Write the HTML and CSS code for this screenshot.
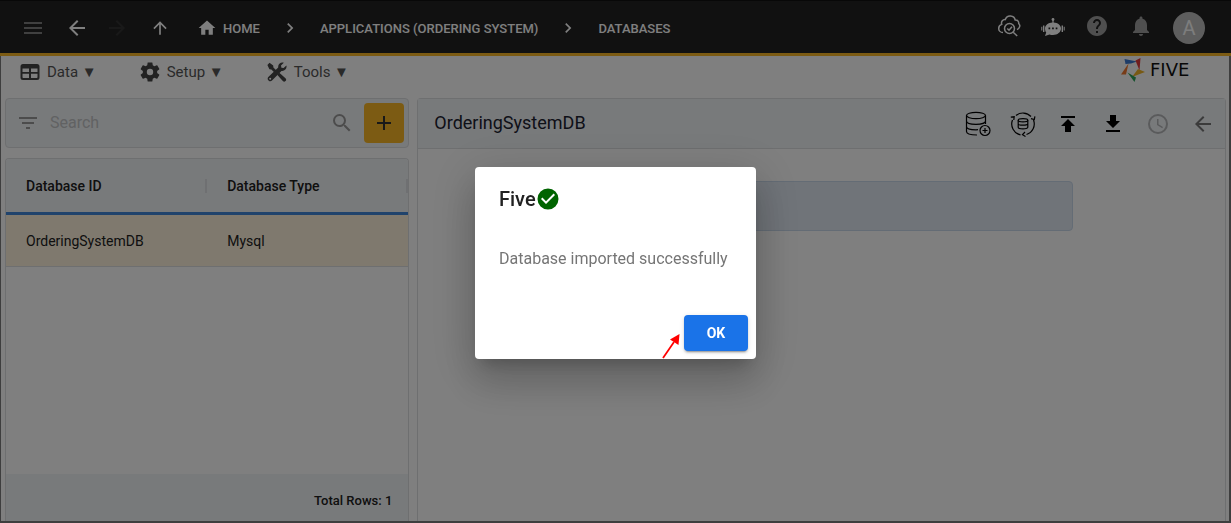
FILE: index.html
```html
<!DOCTYPE html>
<html lang="en">
<head>
<meta charset="utf-8">
<meta name="viewport" content="width=device-width, initial-scale=1">
<title>Five - Databases</title>
<link rel="stylesheet" href="styles.css">
</head>
<body>
<div class="app">
  <header class="topbar">
    <div class="nav-buttons">
      <button class="nav-button muted menu-toggle" type="button" aria-label="Menu"><svg class="icon" viewBox="0 0 24 24"><path d="M3 6h18v2H3zM3 11h18v2H3zM3 16h18v2H3z"/></svg></button>
      <button class="nav-button" type="button" aria-label="Back"><svg class="icon" viewBox="0 0 24 24"><path d="M20 11H7.830l5.590-5.590L12 4l-8 8 8 8 1.410-1.410L7.830 13H20z"/></svg></button>
      <button class="nav-button disabled" type="button" aria-label="Forward" disabled><svg class="icon" viewBox="0 0 24 24"><path d="M12 4l-1.410 1.410L16.170 11H4v2h12.170l-5.580 5.590L12 20l8-8z"/></svg></button>
      <button class="nav-button" type="button" aria-label="Up"><svg class="icon-s" viewBox="0 0 24 24"><path d="M4 12l1.410 1.410L11 7.830V20h2V7.830l5.580 5.590L20 12l-8-8z"/></svg></button>
    </div>
    <nav class="crumbs" aria-label="Breadcrumb">
      <a class="crumb" href="#"><svg class="icon-s" viewBox="0 0 24 24"><path d="M10 20v-6h4v6h5v-8h3L12 3 2 12h3v8z"/></svg>HOME</a>
      <svg class="icon-s" viewBox="0 0 24 24"><path d="M10 6L8.590 7.410 13.170 12l-4.580 4.590L10 18l6-6z"/></svg>
      <a class="crumb" href="#">APPLICATIONS (ORDERING SYSTEM)</a>
      <svg class="icon-s" viewBox="0 0 24 24"><path d="M10 6L8.590 7.410 13.170 12l-4.580 4.590L10 18l6-6z"/></svg>
      <a class="crumb" href="#">DATABASES</a>
    </nav>
    <div class="top-actions">
      <button class="action" type="button" aria-label="Inspect cloud"><svg class="icon" viewBox="0 0 24 24" fill="none" stroke="currentColor" stroke-width="1.500"><path d="M6 18.500C3.500 18.500 1.700 16.700 1.700 14.400c0-2 1.300-3.500 3-4C3.800 7.500 6 5.300 8.300 5.600 9.200 3 11.200 1.800 13.500 2c2.500.2 4.300 1.800 4.700 4 2.400-.1 3.800 1.400 3.500 3.500 1.200 1.200 1.200 3.300.2 4.600-.5.700-1.200 1.100-2 1.300"/><circle cx="12.500" cy="14.500" r="5"/><path d="M10.300 14.500l1.700 1.700 3-3.500M16.200 18.200l4 3.800"/></svg></button>
      <button class="action" type="button" aria-label="Assistant"><svg class="icon" viewBox="0 0 24 24"><circle cx="12" cy="5.500" r="1.400"/><path fill-rule="evenodd" d="M11.400 6h1.200v2.500c4 .2 7.400 2.700 7.400 6 0 3.600-3.500 6.500-8 6.500-1.300 0-2.500-.2-3.500-.6L4 22l1.200-3.500c-.8-1-1.200-2.500-1.200-4 0-3.300 3.400-5.800 7.400-6zM7.500 13.500v1.700h1.700v-1.700zm3.600 0v1.700h1.700v-1.700zm3.600 0v1.700h1.700v-1.700z"/><path d="M2 11.500h1.400v6.500H2zM20.600 11.500H22v6.500h-1.400zM.3 12.700h1v3.800h-1zM22.700 12.700h1v3.800h-1z"/></svg></button>
      <button class="action soft" type="button" aria-label="Help"><svg class="icon" viewBox="0 0 24 24"><path d="M12 2C6.480 2 2 6.480 2 12s4.480 10 10 10 10-4.480 10-10S17.520 2 12 2zm1 17h-2v-2h2zm2.070-7.750l-.9.920C13.450 12.900 13 13.500 13 15h-2v-.5c0-1.100.45-2.100 1.170-2.830l1.240-1.260c.37-.36.59-.86.59-1.410 0-1.100-.9-2-2-2s-2 .9-2 2H8c0-2.210 1.790-4 4-4s4 1.790 4 4c0 .88-.36 1.680-.93 2.250z"/></svg></button>
      <button class="action soft" type="button" aria-label="Notifications"><svg class="icon" viewBox="0 0 24 24"><path d="M12 22c1.100 0 2-.9 2-2h-4c0 1.100.89 2 2 2zm6-6v-5c0-3.070-1.640-5.640-4.500-6.320V4c0-.83-.67-1.500-1.500-1.500s-1.500.67-1.500 1.500v.68C7.630 5.360 6 7.920 6 11v5l-2 2v1h16v-1z"/></svg></button>
      <button class="avatar" type="button" aria-label="Account">A</button>
    </div>
  </header>

  <div class="workspace">
    <div class="menubar">
      <nav class="menus" aria-label="Main">
        <button class="menu" type="button"><svg class="icon-s" viewBox="0 0 20 20"><path fill-rule="evenodd" d="M3 2h14a2.500 2.500 0 0 1 2.500 2.500v11A2.500 2.500 0 0 1 17 18H3A2.500 2.500 0 0 1 .5 15.500v-11A2.500 2.500 0 0 1 3 2zM2.500 6.500v3.600H9V6.500zm8.500 0v3.600h6.500V6.500zm-8.500 5.300V15c0 .6.300 1 1 1H9v-4.200zm8.500 0V16h5.500c.7 0 1-.4 1-1v-3.200z"/></svg>Data ▼</button>
        <button class="menu" type="button"><svg class="icon-s" viewBox="2 2 20 20"><path d="M19.140 12.940c.04-.3.06-.61.06-.94s-.02-.64-.07-.94l2.030-1.580c.18-.14.23-.41.12-.61l-1.920-3.320c-.12-.22-.37-.29-.59-.22l-2.390.96c-.5-.38-1.030-.7-1.620-.94l-.36-2.540c-.04-.24-.24-.41-.48-.41h-3.840c-.24 0-.43.17-.47.41l-.36 2.540c-.59.24-1.130.57-1.620.94l-2.390-.96c-.22-.08-.47 0-.59.22L2.740 8.870c-.12.21-.08.47.12.61l2.030 1.580c-.05.3-.09.63-.09.94s.02.640.07.940l-2.030 1.580c-.18.14-.23.41-.12.61l1.920 3.320c.12.22.37.29.59.22l2.390-.96c.5.38 1.030.7 1.620.94l.36 2.540c.05.24.24.41.48.41h3.840c.24 0 .44-.17.47-.41l.36-2.540c.59-.24 1.130-.56 1.620-.94l2.390.96c.22.08.47 0 .59-.22l1.920-3.320c.12-.22.07-.47-.12-.61zM12 15.200a3.200 3.200 0 1 1 0-6.400 3.200 3.200 0 0 1 0 6.400z"/></svg>Setup ▼</button>
        <button class="menu" type="button"><svg class="icon-s" viewBox="0 0 20 20"><path d="M2.500.8l3.700 2.700.2 2 4 4-2 2-4-4-2-.3L.4 3z"/><path d="M12.300 10.800l6.200 5.500a1.900 1.900 0 0 1-2.700 2.700l-5.600-6.200z"/><path fill-rule="evenodd" d="M16.800.8l-2.800 2.700.4 2.200 2.200.4 2.800-2.700c.8 3-1.500 6-4.900 5.500L5 18.600A2.600 2.600 0 0 1 1.300 15l9.900-9.500C10.800 2.300 13.600-.1 16.800.8zM3.200 15.800a1 1 0 1 0 0 2 1 1 0 0 0 0-2z"/></svg>Tools ▼</button>
      </nav>
      <a class="brand" href="#" aria-label="Five">
        <svg class="brand-mark" viewBox="0 0 24 24"><path fill="#3a78d0" d="M3.500 1l12.500 2.500-6 2-5.500.5z"/><path fill="#e23b3b" d="M19.500 0l-1 12.500-4-10z"/><path fill="#f0b429" d="M17 11l7 3-13 5z"/><path fill="#2da35a" d="M6.500 14.500l8.500 5L13.500 24z"/><path fill="#f07830" d="M7.500 5.500L5 16.500H0z"/></svg>
        <span class="brand-name">FIVE</span>
      </a>
    </div>

    <main class="columns">
      <section class="list-column">
        <form class="search-bar" role="search">
          <button class="plain" type="button" aria-label="Filter"><svg class="icon" viewBox="0 0 24 24"><path d="M10 18h4v-2h-4zM3 6v2h18V6zm3 7h12v-2H6z"/></svg></button>
          <input class="search-input" type="search" placeholder="Search" aria-label="Search">
          <button class="plain" type="button" aria-label="Run search"><svg class="icon" viewBox="0 0 24 24"><path d="M15.500 14h-.79l-.28-.27A6.470 6.470 0 0 0 16 9.500 6.500 6.500 0 1 0 9.500 16c1.610 0 3.090-.59 4.230-1.570l.27.28v.79l5 4.990L20.490 19zm-6 0C7.010 14 5 11.990 5 9.500S7.010 5 9.500 5 14 7.010 14 9.500 11.990 14 9.500 14z"/></svg></button>
          <button class="add" type="button" aria-label="Add database"><svg class="icon" viewBox="0 0 24 24"><path d="M19 13h-6v6h-2v-6H5v-2h6V5h2v6h6z"/></svg></button>
        </form>
        <div class="grid-panel">
          <table class="grid">
            <thead><tr><th scope="col"><div class="head-cell">Database ID</div></th><th scope="col"><div class="head-cell">Database Type</div></th></tr></thead>
            <tbody><tr><td>OrderingSystemDB</td><td>Mysql</td></tr></tbody>
          </table>
          <div class="grid-footer">Total Rows: 1</div>
        </div>
      </section>

      <section class="detail">
        <div class="detail-head">
          <h1 class="detail-title">OrderingSystemDB</h1>
          <div class="tools">
            <button class="tool" type="button" aria-label="Add table"><svg class="icon-l" viewBox="0 0 26 26" fill="none" stroke="currentColor" stroke-width="1.200"><ellipse cx="11" cy="4.500" rx="9.500" ry="3.200"/><path d="M1.500 4.500v16c0 2 4 3.500 10.500 3.500M20.500 4.500V13M1.500 10c0 2 4 3.300 9.500 3.300s9.500-1.300 9.500-3.300M1.500 15.500c0 2 4 3.300 9.500 3.300l2-.1"/><circle cx="20" cy="19.500" r="5"/><path d="M20 17v5M17.500 19.500h5"/></svg></button>
            <button class="tool" type="button" aria-label="Synchronise"><svg class="icon-l" viewBox="0 0 26 26" fill="none" stroke="currentColor" stroke-width="1.200"><path d="M6 4.500a11 11 0 0 1 15 1M23.500 9a11 11 0 0 1-7 14.500M10.500 23.800A11 11 0 0 1 2.500 9M.8 6.200l3.400-.4-.4 3.200M21 7.700l3.300.8.600-3.200M15 21l-2.500 2.700 3 1.800"/><ellipse cx="13" cy="9.300" rx="4.800" ry="1.600"/><path d="M8.200 9.300v7c0 2.200 9.600 2.200 9.600 0v-7M8.200 12.700c0 2 9.600 2 9.600 0"/></svg></button>
            <button class="tool" type="button" aria-label="Import"><svg class="icon" viewBox="0 0 24 24"><path d="M5 4v2h14V4zm0 10h4v6h6v-6h4l-7-7z"/></svg></button>
            <button class="tool" type="button" aria-label="Export"><svg class="icon" viewBox="0 0 24 24"><path d="M19 9h-4V3H9v6H5l7 7zM5 18v2h14v-2z"/></svg></button>
            <button class="tool faint" type="button" aria-label="History"><svg class="icon" viewBox="0 0 24 24"><path d="M12 2a10 10 0 1 0 0 20 10 10 0 0 0 0-20zm0 18a8 8 0 1 1 0-16 8 8 0 0 1 0 16zm.5-13H11v6l5.250 3.150.75-1.230-4.500-2.670z"/></svg></button>
            <button class="tool grey" type="button" aria-label="Close"><svg class="icon" viewBox="0 0 24 24"><path d="M20 11H7.830l5.590-5.590L12 4l-8 8 8 8 1.410-1.410L7.830 13H20z"/></svg></button>
          </div>
        </div>
        <div class="detail-body"><div class="field"></div></div>
      </section>
    </main>
  </div>
</div>

<div class="backdrop">
  <div class="dialog" role="alertdialog" aria-modal="true" aria-labelledby="dialog-title" aria-describedby="dialog-message">
    <h2 class="dialog-title" id="dialog-title">Five<svg class="icon" viewBox="0 0 24 24"><path d="M12 1.500a10.500 10.500 0 1 0 0 21 10.500 10.500 0 0 0 0-21zM10 17l-5-5 1.410-1.410L10 14.170l7.590-7.590L19 8z"/></svg></h2>
    <p class="dialog-message" id="dialog-message">Database imported successfully</p>
    <div class="dialog-actions"><button class="ok" type="button">OK</button></div>
    <svg class="pointer" viewBox="0 0 18 25"><path d="M1 24L12 8" stroke="#f00" stroke-width="1.800"/><path fill="#f00" d="M17.500 0L16.500 11 8 5.500z"/></svg>
  </div>
</div>
</body>
</html>
```
FILE: styles.css
```css
* { box-sizing: border-box; }
body { margin: 0; font-family: Roboto, "Liberation Sans", sans-serif; font-size: 14px; color: #212121; }
button { border: 0; padding: 0; background: none; font: inherit; color: inherit; cursor: pointer; }
svg { display: block; flex: none; fill: currentColor; }
svg[fill="none"] { fill: none; }
a { color: inherit; text-decoration: none; }
h1, h2, p { margin: 0; font-weight: 400; }

.icon { width: 24px; height: 24px; }
.icon-s { width: 20px; height: 20px; }
.icon-l { width: 26px; height: 26px; }

.app { display: flex; flex-direction: column; min-height: 100vh; background: #fff; }

.topbar { display: flex; align-items: center; height: 56px; padding: 2px 26px 0 13px; border-top: 1px solid #111; border-bottom: 3px solid #f8b627; background: #222; color: #fff; }
.nav-buttons { display: flex; align-items: center; }
.nav-button { display: flex; justify-content: center; width: 40px; padding: 8px 0; }
.menu-toggle { margin-right: 4px; }
.nav-button:last-child { margin-left: 3px; }
.muted { color: #808080; }
.disabled { color: #333; }
.crumbs { display: flex; align-items: center; gap: 20px; margin-left: 17px; font-size: 13px; font-weight: 500; white-space: nowrap; }
.crumb { display: flex; align-items: center; gap: 6px; }
.top-actions { display: flex; align-items: center; gap: 20px; margin-left: auto; }
.action { padding-bottom: 4px; }
.soft { color: #9e9e9e; }
.avatar { width: 32px; height: 32px; border-radius: 50%; background: #bdbdbd; color: #fafafa; font-size: 20px; line-height: 32px; }

.workspace { display: flex; flex: 1; flex-direction: column; border: solid #7c7c7c; border-width: 0 2px 2px 1px; }
.menubar { display: flex; align-items: flex-start; justify-content: space-between; height: 42px; padding: 0 20px 0 19px; }
.menus { display: flex; gap: 43px; }
.menu { display: flex; align-items: center; gap: 7px; height: 32px; font-size: 15px; color: #555; white-space: nowrap; }
.menu svg { color: #444; }
.brand { display: flex; align-items: center; gap: 5px; height: 28px; color: #111; }
.brand-mark { width: 24px; height: 24px; }
.brand-name { width: 59px; font-family: "DejaVu Sans", sans-serif; font-size: 18px; line-height: 24px; }

.columns { display: grid; flex: 1; grid-template-columns: 1fr 2fr; gap: 8px; padding: 0 3px 0 4px; }
.list-column { display: flex; flex-direction: column; gap: 10px; min-width: 0; }
.search-bar { display: flex; align-items: center; height: 50px; padding: 0 4px 0 10px; border: 1px solid #dcdee0; border-radius: 4px; background: #f1f4f7; color: #999; }
.search-input { flex: 1; min-width: 0; padding: 0 10px 2px; border: 0; background: none; font: inherit; font-size: 16px; color: #333; }
.search-input::placeholder { color: #c2c4c6; opacity: 1; }
.add { display: flex; align-items: center; justify-content: center; width: 40px; height: 40px; margin-left: 10px; border-radius: 4px; background: #f8b627; color: #333; }

.grid-panel { display: flex; flex: 1; flex-direction: column; justify-content: space-between; border: 1px solid #dcdee0; border-bottom: 0; border-radius: 4px 4px 0 0; overflow: hidden; }
.grid { width: 100%; border-collapse: separate; border-spacing: 0; table-layout: fixed; text-align: left; }
.grid th { height: 56px; padding: 0; border-bottom: 3px solid #4086d8; background: #f1f4f7; font-weight: 500; }
.head-cell { padding-left: 20px; border-right: 2px solid #dfe1e4; line-height: 14px; }
.grid td { height: 52px; padding: 0 20px; border-bottom: 1px solid #dcdee0; background: #fff3dc; }
.grid-footer { height: 47px; padding: 0 16px; background: #f1f4f7; font-size: 13px; font-weight: 500; line-height: 54px; text-align: right; }

.detail { display: flex; flex-direction: column; min-width: 0; border: 1px solid #dcdee0; border-bottom: 0; border-radius: 4px 4px 0 0; }
.detail-head { display: flex; align-items: center; justify-content: space-between; height: 50px; padding: 0 10px 0 16px; border-bottom: 1px solid #dcdee0; background: #f1f4f7; }
.detail-title { padding-bottom: 2px; font-size: 18px; color: #1c2230; }
.tools { display: flex; align-items: center; gap: 20px; color: #000; }
.tool { display: flex; justify-content: center; width: 25px; }
.faint { color: #b4b6b8; }
.grey { color: #777; }
.detail-body { flex: 1; padding: 32px 16px; }
.field { width: 65%; height: 50px; margin: 0 auto; border: 1px solid #c8d8ea; border-radius: 4px; background: #e0e8f2; }

.backdrop { position: fixed; inset: 0; display: flex; align-items: center; justify-content: center; padding-top: 3px; background: rgba(0, 0, 0, .5); }
.dialog { position: relative; min-width: 281px; border-radius: 4px; background: #fff; box-shadow: 0 11px 15px -7px rgba(0, 0, 0, .2), 0 24px 38px 3px rgba(0, 0, 0, .14), 0 9px 46px 8px rgba(0, 0, 0, .12); }
.dialog-title { display: flex; align-items: center; padding: 16px 24px; font-size: 20px; font-weight: 500; line-height: 32px; color: #212121; }
.dialog-title svg { color: #006400; }
.dialog-message { padding: 16px 24px; font-size: 16px; line-height: 24px; color: #757575; }
.dialog-actions { display: flex; justify-content: flex-end; padding: 28px 8px 8px; }
.ok { width: 64px; height: 36px; border-radius: 4px; background: #1a73e8; color: #fff; font-weight: 700; line-height: 36px; box-shadow: 0 3px 1px -2px rgba(0, 0, 0, .2), 0 2px 2px rgba(0, 0, 0, .14), 0 1px 5px rgba(0, 0, 0, .12); }
.pointer { position: absolute; right: 76px; bottom: 0; width: 18px; height: 25px; }
```
